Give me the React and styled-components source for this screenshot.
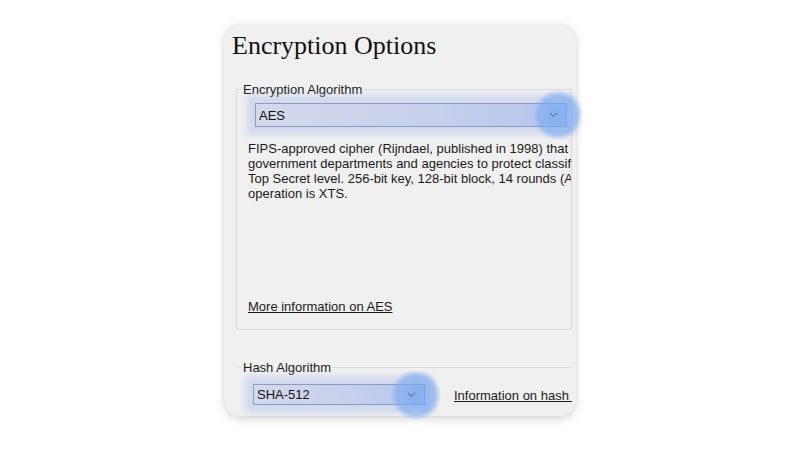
import React from 'react'
import styled, { createGlobalStyle } from 'styled-components'

const Global = createGlobalStyle`
  html, body {
    margin: 0;
    padding: 0;
    background: #ffffff;
  }
  body {
    width: 800px;
    height: 450px;
    overflow: hidden;
  }
`

const Page = styled.div`
  display: flex;
  justify-content: center;
  padding-top: 24px;
  font-family: "Liberation Sans", Arial, sans-serif;
  font-size: 13px;
  color: #1a1a1a;
`

const Card = styled.div`
  width: 352px;
  height: 392px;
  box-sizing: border-box;
  background: #f0f0f0;
  border-radius: 16px;
  box-shadow: 0 3px 10px rgba(0, 0, 0, 0.16), 0 0 2px rgba(0, 0, 0, 0.08);
  padding: 8px 4px 0 12px;
  display: flex;
  flex-direction: column;
`

const Title = styled.h1`
  margin: 0 0 0 -4px;
  font-family: "Liberation Serif", "Times New Roman", serif;
  font-weight: normal;
  font-size: 26px;
  line-height: 28px;
  color: #111;
`

const Group = styled.fieldset`
  margin: ${p => p.$top}px 0 0 0;
  padding: 0 0 ${p => p.$bottom}px 11px;
  border: 1px solid #d9d9d9;
  border-radius: 2px;
  min-width: 0;
  ${p => p.$open && 'border-bottom: none; border-right: none; border-left-color: transparent;'}
`

const Legend = styled.legend`
  margin-left: -7px;
  padding: 0 2px;
  font-size: 13px;
  color: #1a1a1a;
`

const SelectWrap = styled.div`
  position: relative;
  flex: none;
  margin-top: ${p => p.$top}px;
  margin-left: ${p => p.$indent}px;
  width: ${p => p.$width}px;
  height: ${p => p.$height}px;
`

const Select = styled.div`
  height: 100%;
  box-sizing: border-box;
  display: flex;
  align-items: center;
  justify-content: space-between;
  padding: 0 8px 0 3px;
  border: 1px solid #8d9bbf;
  background: linear-gradient(90deg, #d4d9eb 0%, #c6cfeb 60%, #b3c6ee 100%);
  box-shadow: 0 0 6px 8px rgba(160, 185, 235, 0.4);
  font-size: 13px;
  color: #111;
`

const Halo = styled.div`
  position: absolute;
  right: -16px;
  top: 50%;
  width: 50px;
  height: 50px;
  margin-top: -25px;
  border-radius: 50%;
  background: radial-gradient(circle, rgba(120, 168, 240, 0.75) 0%, rgba(120, 168, 240, 0.6) 55%, rgba(120, 168, 240, 0) 72%);
  pointer-events: none;
`

const Chevron = styled.svg`
  position: relative;
  z-index: 1;
  width: 9px;
  height: 6px;
`

const Description = styled.div`
  margin-top: 14px;
  line-height: 15px;
  white-space: nowrap;
  overflow: hidden;
  height: 158px;
`

const Link = styled.a`
  color: #1a1a1a;
  text-decoration: underline;
  white-space: nowrap;
`

const HashRow = styled.div`
  display: flex;
  align-items: center;
`

const HashLinkClip = styled.div`
  flex: 1;
  min-width: 0;
  overflow: hidden;
  white-space: nowrap;
  margin-left: 29px;
  padding-top: 10px;
`

const ChevronIcon = () => (
  <Chevron viewBox="0 0 9 6">
    <polyline points="1,1 4.5,4.5 8,1" fill="none" stroke="#6a7ca6" strokeWidth="1.2" />
  </Chevron>
)

const Dropdown = ({ value, top, indent, width, height }) => (
  <SelectWrap $top={top} $indent={indent} $width={width} $height={height}>
    <Halo />
    <Select>
      <span>{value}</span>
      <ChevronIcon />
    </Select>
  </SelectWrap>
)

export default function App() {
  return (
    <>
      <Global />
      <Page>
        <Card>
          <Title>Encryption Options</Title>
          <Group $top={22} $bottom={15}>
            <Legend>Encryption Algorithm</Legend>
            <Dropdown value="AES" top={6} indent={7} width={312} height={24} />
            <Description>
              FIPS-approved cipher (Rijndael, published in 1998) that may be used by U.S.<br />
              government departments and agencies to protect classified information up to the<br />
              Top Secret level. 256-bit key, 128-bit block, 14 rounds (AES-256). Mode of<br />
              operation is XTS.
            </Description>
            <Link href="#">More information on AES</Link>
          </Group>
          <Group $top={30} $bottom={4} $open>
            <Legend>Hash Algorithm</Legend>
            <HashRow>
              <Dropdown value="SHA-512" top={9} indent={5} width={172} height={21} />
              <HashLinkClip>
                <Link href="#">Information on hash algorithms</Link>
              </HashLinkClip>
            </HashRow>
          </Group>
        </Card>
      </Page>
    </>
  )
}
